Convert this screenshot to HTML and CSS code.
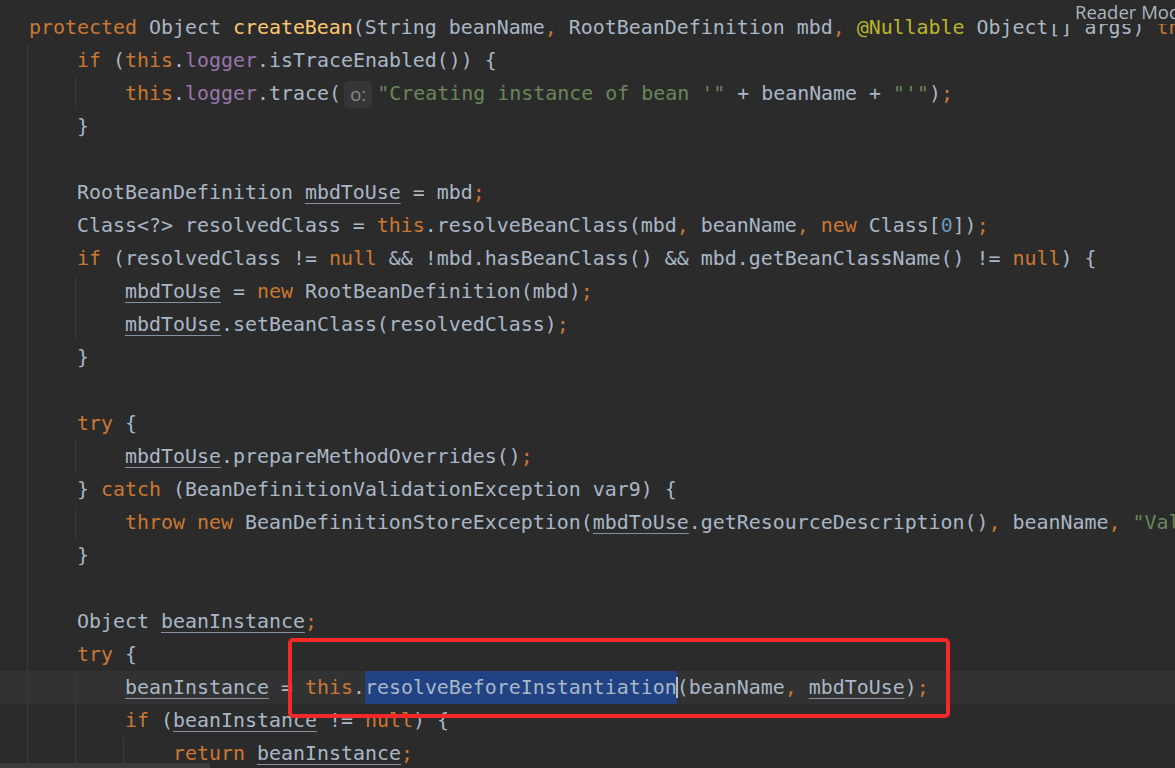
FILE: index.html
```html
<!DOCTYPE html>
<html lang="en">
<head>
<meta charset="utf-8">
<title>createBean</title>
<link rel="stylesheet" href="styles.css">
</head>
<body>
<div class="editor">
  <div class="code">
    <div class="ln"><span class="tx"><span class="k">protected</span> Object <span class="m">createBean</span>(String beanName<span class="k">,</span> RootBeanDefinition mbd<span class="k">,</span> <span class="a">@Nullable</span> Object[] args) <span class="k">throws</span> BeanCreationException {</span></div>
    <div class="ln"><span class="ind"></span><span class="tx"><span class="k">if</span> (<span class="k">this</span>.<span class="f">logger</span>.isTraceEnabled()) {</span></div>
    <div class="ln"><span class="ind"></span><span class="ind"></span><span class="tx"><span class="k">this</span>.<span class="f">logger</span>.trace(<span class="hint">o:</span><span class="s">"Creating instance of bean '"</span> + beanName + <span class="s">"'"</span>)<span class="k">;</span></span></div>
    <div class="ln"><span class="ind"></span><span class="tx">}</span></div>
    <div class="ln"><span class="ind"></span><span class="tx"></span></div>
    <div class="ln"><span class="ind"></span><span class="tx">RootBeanDefinition <span class="u">mbdToUse</span> = mbd<span class="k">;</span></span></div>
    <div class="ln"><span class="ind"></span><span class="tx">Class&lt;?&gt; resolvedClass = <span class="k">this</span>.resolveBeanClass(mbd<span class="k">,</span> beanName<span class="k">,</span> <span class="k">new</span> Class[<span class="n">0</span>])<span class="k">;</span></span></div>
    <div class="ln"><span class="ind"></span><span class="tx"><span class="k">if</span> (resolvedClass != <span class="k">null</span> &amp;&amp; !mbd.hasBeanClass() &amp;&amp; mbd.getBeanClassName() != <span class="k">null</span>) {</span></div>
    <div class="ln"><span class="ind"></span><span class="ind"></span><span class="tx"><span class="u">mbdToUse</span> = <span class="k">new</span> RootBeanDefinition(mbd)<span class="k">;</span></span></div>
    <div class="ln"><span class="ind"></span><span class="ind"></span><span class="tx"><span class="u">mbdToUse</span>.setBeanClass(resolvedClass)<span class="k">;</span></span></div>
    <div class="ln"><span class="ind"></span><span class="tx">}</span></div>
    <div class="ln"><span class="ind"></span><span class="tx"></span></div>
    <div class="ln"><span class="ind"></span><span class="tx"><span class="k">try</span> {</span></div>
    <div class="ln"><span class="ind"></span><span class="ind"></span><span class="tx"><span class="u">mbdToUse</span>.prepareMethodOverrides()<span class="k">;</span></span></div>
    <div class="ln"><span class="ind"></span><span class="tx">} <span class="k">catch</span> (BeanDefinitionValidationException var9) {</span></div>
    <div class="ln"><span class="ind"></span><span class="ind"></span><span class="tx"><span class="k">throw new</span> BeanDefinitionStoreException(<span class="u">mbdToUse</span>.getResourceDescription()<span class="k">,</span> beanName<span class="k">,</span> <span class="s">"Validation of method overrides failed"</span><span class="k">,</span> var9)<span class="k">;</span></span></div>
    <div class="ln"><span class="ind"></span><span class="tx">}</span></div>
    <div class="ln"><span class="ind"></span><span class="tx"></span></div>
    <div class="ln"><span class="ind"></span><span class="tx">Object <span class="u">beanInstance</span><span class="k">;</span></span></div>
    <div class="ln"><span class="ind"></span><span class="tx"><span class="k">try</span> {</span></div>
    <div class="ln cur"><span class="ind"></span><span class="ind"></span><span class="tx"><span class="u">beanInstance</span> = <span class="k">this</span>.<span class="sel">resolveBeforeInstantiation</span><span class="caret"></span>(beanName<span class="k">,</span> <span class="u">mbdToUse</span>)<span class="k">;</span></span></div>
    <div class="ln"><span class="ind"></span><span class="ind"></span><span class="tx"><span class="k">if</span> (<span class="u">beanInstance</span> != <span class="k">null</span>) {</span></div>
    <div class="ln"><span class="ind"></span><span class="ind"></span><span class="ind"></span><span class="tx"><span class="k">return</span> <span class="u">beanInstance</span><span class="k">;</span></span></div>
  </div>
  <div class="reader">Reader Mode</div>
  <div class="mark"></div>
  <div class="hscroll"></div>
</div>
</body>
</html>
```
FILE: styles.css
```css
html, body {
  margin: 0;
  padding: 0;
  background: #2b2b2b;
}

.editor {
  position: relative;
  width: 1175px;
  height: 768px;
  overflow: hidden;
  background: #2b2b2b;
}

.code {
  padding-top: 11px;
  font-family: "DejaVu Sans Mono", "Liberation Mono", monospace;
  font-size: 19.93px;
  color: #a9b7c6;
}

.ln {
  display: flex;
  height: 33px;
  line-height: 33px;
  padding-left: 27px;
  white-space: pre;
}

.ln.cur {
  background: #323232;
}

.ind {
  flex: none;
  width: 48px;
  box-sizing: border-box;
  border-left: 1px solid #393939;
}

.tx {
  flex: none;
  margin-left: 2px;
}

.k { color: #cc7832; }
.f { color: #9876aa; }
.m { color: #ffc66d; }
.s { color: #6a8759; }
.n { color: #6897bb; }
.a { color: #bbb529; }

.u {
  text-decoration: underline;
  text-decoration-color: #8391a0;
  text-underline-offset: 4px;
  text-decoration-thickness: 1px;
}

.sel {
  background: #214283;
  display: inline-block;
  height: 33px;
}

.caret {
  display: inline-block;
  width: 2px;
  height: 21px;
  margin: 0 -1px;
  vertical-align: -4px;
  background: #bbbbbb;
  position: relative;
}

.hint {
  display: inline-block;
  height: 27px;
  line-height: 27px;
  margin: 0 5px 0 3px;
  padding: 0 6px;
  border-radius: 5px;
  background: #363636;
  color: #878787;
  font-family: "Open Sans", "DejaVu Sans", sans-serif;
  font-size: 19px;
  vertical-align: middle;
}

.reader {
  position: absolute;
  top: 0;
  right: 0;
  width: 130px;
  height: 24px;
  padding-left: 30px;
  box-sizing: border-box;
  background: #2b2b2b;
  color: #adb6bf;
  font-family: "Open Sans", "DejaVu Sans", sans-serif;
  font-size: 18.5px;
  line-height: 23px;
  white-space: nowrap;
  overflow: hidden;
}

.mark {
  position: absolute;
  left: 288px;
  top: 638px;
  width: 662px;
  height: 80px;
  box-sizing: border-box;
  border: 4px solid #f42828;
  border-radius: 5px;
}

.hscroll {
  position: absolute;
  left: 0;
  bottom: 0;
  width: 210px;
  height: 5px;
  background: #3c3c3c;
}
```
